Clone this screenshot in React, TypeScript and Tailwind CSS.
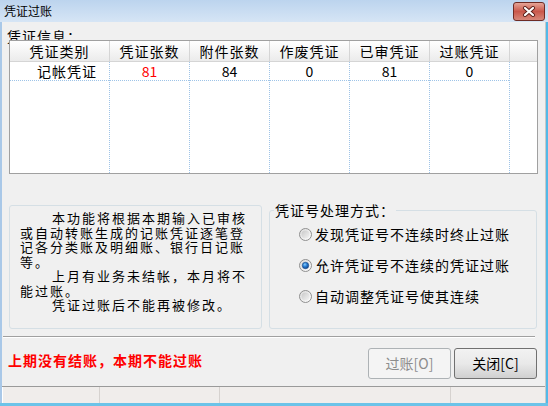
import React from 'react';

const headers = ['凭证类别', '凭证张数', '附件张数', '作废凭证', '已审凭证', '过账凭证'];

const row: { text: string; red?: boolean; cjk?: boolean }[] = [
  { text: '记帐凭证', cjk: true },
  { text: '81', red: true },
  { text: '84' },
  { text: '0' },
  { text: '81' },
  { text: '0' },
];

const options = ['发现凭证号不连续时终止过账', '允许凭证号不连续的凭证过账', '自动调整凭证号使其连续'];

function Radio({ checked }: { checked?: boolean }) {
  return (
    <svg width="13" height="13" viewBox="0 0 13 13" className="shrink-0">
      <defs>
        <linearGradient id="rg-out" x1="0" y1="0" x2="1" y2="1">
          <stop offset="0" stopColor="#dcdcdc" />
          <stop offset="1" stopColor="#ffffff" />
        </linearGradient>
        <linearGradient id="rg-in" x1="0" y1="0" x2="1" y2="1">
          <stop offset="0" stopColor="#c9c9c9" />
          <stop offset="1" stopColor="#f4f4f4" />
        </linearGradient>
        <radialGradient id="rg-dot" cx="0.4" cy="0.35" r="0.7">
          <stop offset="0" stopColor="#8ad0ff" />
          <stop offset="0.45" stopColor="#2a7fd4" />
          <stop offset="1" stopColor="#0e3f86" />
        </radialGradient>
      </defs>
      <circle cx="6.5" cy="6.5" r="6" fill="url(#rg-out)" stroke="#8f8f8f" />
      <circle cx="6.5" cy="6.5" r="4" fill="url(#rg-in)" />
      {checked && <circle cx="6.5" cy="6.5" r="3.2" fill="url(#rg-dot)" stroke="#164a8a" strokeWidth="0.6" />}
    </svg>
  );
}

export default function App() {
  return (
    <div className="w-[548px] h-[406px] flex flex-col overflow-hidden text-black font-['Noto_Sans_CJK_SC',sans-serif]">
      {/* title bar */}
      <div className="h-[22px] flex items-start justify-between bg-linear-to-b from-[#bcd4ee] to-[#d6e5f5]">
        <div className="pl-[4px] pt-[4px] text-[12px] leading-[14px]">凭证过账</div>
        <div className="mt-[2px] mr-[3px] w-[32px] h-[19px] rounded-[3px] border border-[#6e2b24] bg-linear-to-b from-[#e5a497] via-[#c9574b] to-[#d7877a] flex items-center justify-center">
          <svg width="14" height="11" viewBox="0 0 14 11">
            <path d="M3 2 L11 9 M11 2 L3 9" stroke="#5a1f1a" strokeWidth="4" strokeLinecap="round" />
            <path d="M3 2 L11 9 M11 2 L3 9" stroke="#ffffff" strokeWidth="2.2" strokeLinecap="round" />
          </svg>
        </div>
      </div>

      <div className="flex-1 flex">
        <div className="w-[2px] bg-[#a9c8e8]" />
        <div className="flex-1 flex flex-col bg-[#f0f0f0]">
          {/* label partly hidden by the grid */}
          <div className="pt-[7px] pl-[5px] h-[18px] text-[14px] leading-[15px] tracking-[1px]">
            凭证信息：
          </div>

          {/* grid */}
          <div className="relative z-10 ml-[7px] mr-[7px] h-[134px] border border-[#a0a0a0] bg-white flex">
            {headers.map((h, i) => (
              <div key={h} className={`flex flex-col ${i === 0 ? 'w-[100px]' : 'w-[80px]'}`}>
                <div className="h-[21px] flex items-center justify-center border-r border-b border-[#d5d5d5] bg-linear-to-b from-[#ffffff] to-[#ebebeb] text-[14px] tracking-[1px]">
                  {h}
                </div>
                <div className="flex-1 border-r border-dotted border-[#9fc4e8]">
                  <div
                    className={`h-[19px] flex items-center border-b border-dotted border-[#9fc4e8] text-[14px] ${
                      row[i].cjk ? 'pl-[27px] tracking-[1px]' : 'justify-center'
                    } ${row[i].red ? 'text-[#ff0000]' : ''}`}
                  >
                    {row[i].text}
                  </div>
                </div>
              </div>
            ))}
            <div className="flex-1 flex flex-col">
              <div className="h-[21px] border-b border-[#d5d5d5] bg-linear-to-b from-[#ffffff] to-[#ebebeb]" />
            </div>
          </div>

          {/* group boxes */}
          <div className="mt-[29px] ml-[7px] mr-[8px] h-[126px] flex items-end gap-[7px]">
            <div className="w-[253px] h-[124px] rounded-[3px] border border-[#d5dfe5] pt-[5px] pl-[10px] text-[13px] leading-[14.5px] tracking-[2px] whitespace-nowrap">
              <div className="pl-[32px]">本功能将根据本期输入已审核</div>
              <div>或自动转账生成的记账凭证逐笔登</div>
              <div>记各分类账及明细账、银行日记账</div>
              <div>等。</div>
              <div className="pl-[32px]">上月有业务未结帐，本月将不</div>
              <div>能过账。</div>
              <div className="pl-[32px]">凭证过账后不能再被修改。</div>
            </div>
            <fieldset className="flex-1 h-[126px] rounded-[3px] border border-[#d5dfe5] pl-[29px]">
              <legend className="ml-[-25px] px-[1px] text-[14px] leading-[15px] tracking-[1px]">凭证号处理方式：</legend>
              <div className="mt-[1px] flex flex-col">
                {options.map((o, i) => (
                  <div key={o} className="h-[31px] flex items-center gap-[3px] text-[14px] tracking-[1px] whitespace-nowrap">
                    <Radio checked={i === 1} />
                    <span>{o}</span>
                  </div>
                ))}
              </div>
            </fieldset>
          </div>

          {/* separator */}
          <div className="mt-[7px] ml-[1px] mr-[10px] h-[2px] border-t border-b border-t-[#a0a0a0] border-b-white" />

          {/* bottom row */}
          <div className="mt-[10px] h-[31px] pl-[6px] pr-[8px] flex items-start justify-between">
            <div className="mt-[5px] text-[14px] leading-[15px] tracking-[1px] font-bold text-[#ff0000]">
              上期没有结账，本期不能过账
            </div>
            <div className="flex gap-[3px]">
              <button
                disabled
                className="w-[83px] h-[31px] rounded-[3px] border border-[#adb2b5] bg-[#f4f4f4] text-[14px] text-[#8d8d8d]"
              >
                过账[O]
              </button>
              <button className="w-[83px] h-[31px] rounded-[3px] border border-[#707070] bg-linear-to-b from-[#f2f2f2] via-[#e9e9e9] to-[#d0d0d0] text-[14px]">
                关闭[C]
              </button>
            </div>
          </div>

          {/* status bar */}
          <div className="mt-[7px] h-[17px] border-t border-[#9a9a9a] bg-[#f0edeb] flex">
            <div className="w-[98px] border-r border-[#d6d2cf] border-l border-l-white" />
            <div className="w-[120px] border-r border-[#d6d2cf]" />
            <div className="w-[231px] border-r border-[#d6d2cf]" />
            <div className="flex-1" />
          </div>
        </div>
        <div className="w-[1px] bg-[#c8c8c8]" />
        <div className="w-[2px] bg-[#52b9e8]" />
      </div>
      <div className="h-[3px] bg-[#6cc3e8]" />
    </div>
  );
}
